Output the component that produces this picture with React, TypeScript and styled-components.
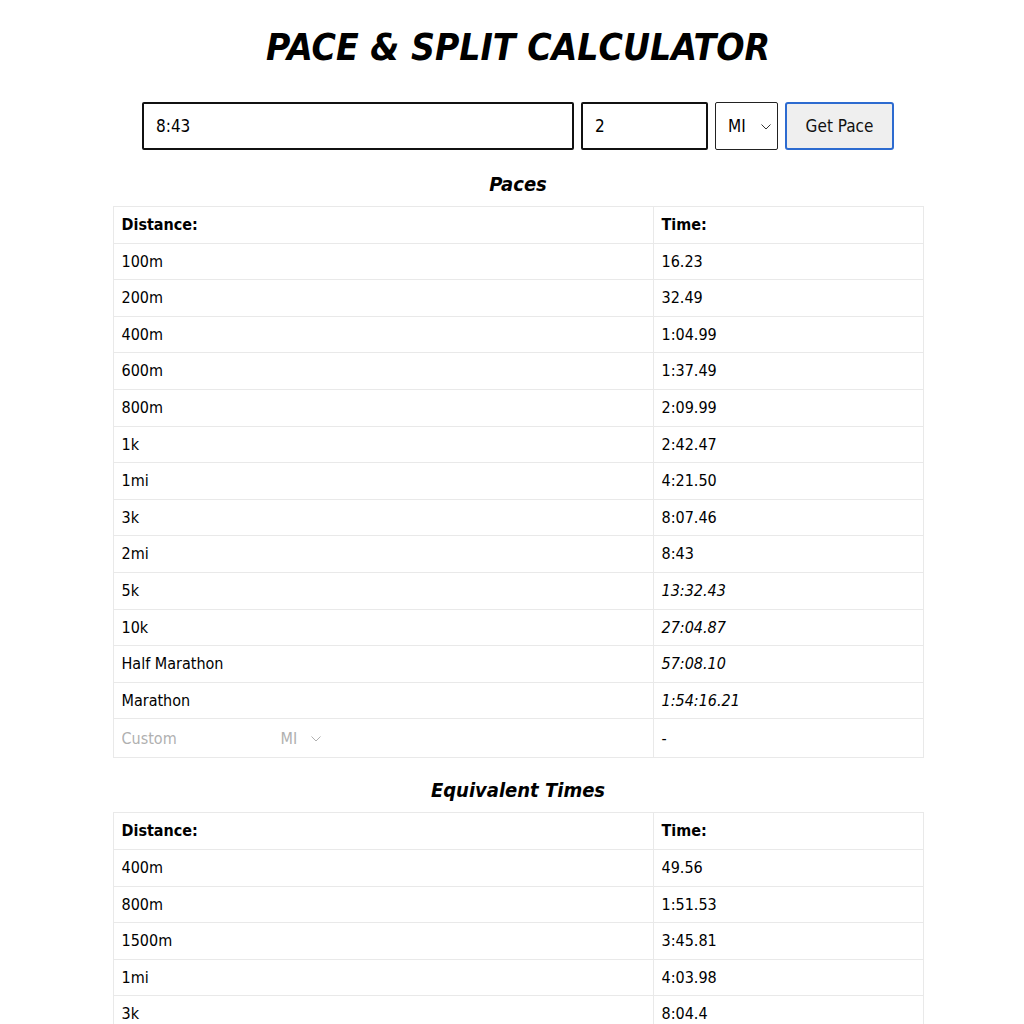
import React from "react";
import styled, { createGlobalStyle } from "styled-components";

const GlobalStyle = createGlobalStyle`
  html, body {
    margin: 0;
    padding: 0;
    background: #ffffff;
  }
  body {
    font-family: "DejaVu Sans Condensed", "DejaVu Sans", sans-serif;
    color: #000;
    font-size: 16px;
  }
`;

const Page = styled.main`
  display: flex;
  flex-direction: column;
  align-items: center;
  padding-left: 12px;
  padding-bottom: 40px;
`;

const Title = styled.h1`
  margin: 24px 0 0;
  font-size: 37px;
  line-height: 48px;
  font-weight: bold;
  font-style: italic;
`;

const Form = styled.form`
  margin-top: 30px;
  display: flex;
  gap: 7px;
  height: 48px;
`;

const TextInput = styled.input<{ $w: number }>`
  box-sizing: border-box;
  width: ${(p) => p.$w}px;
  height: 48px;
  border: 2px solid #111;
  border-radius: 2px;
  padding: 0 12px;
  font-family: inherit;
  font-size: 17px;
  color: #000;
  background: #fff;
  outline: none;
`;

const SelectWrap = styled.div<{ $w?: number }>`
  position: relative;
  display: inline-flex;
  align-items: center;
  ${(p) => (p.$w ? `width: ${p.$w}px;` : "")}
`;

const Chevron = styled.svg<{ $right: number; $color: string }>`
  position: absolute;
  right: ${(p) => p.$right}px;
  top: 50%;
  width: 10px;
  height: 6px;
  margin-top: -2px;
  pointer-events: none;
  stroke: ${(p) => p.$color};
  fill: none;
  stroke-width: 1;
`;

const UnitSelect = styled.select`
  appearance: none;
  -webkit-appearance: none;
  box-sizing: border-box;
  width: 63px;
  height: 48px;
  border: 1.5px solid #222;
  border-radius: 2px;
  padding: 0 0 0 12px;
  font-family: inherit;
  font-size: 17px;
  color: #000;
  background: #fff;
  outline: none;
`;

const Button = styled.button`
  box-sizing: border-box;
  width: 109px;
  height: 48px;
  border: 2px solid #2d6bd0;
  border-radius: 3px;
  background: #efefef;
  font-family: inherit;
  font-size: 17px;
  color: #111;
  padding: 0;
`;

const SectionTitle = styled.h2<{ $top: number }>`
  margin: ${(p) => p.$top}px 0 10px;
  font-size: 20px;
  line-height: 24px;
  font-weight: bold;
  font-style: italic;
`;

const Table = styled.table`
  width: 810px;
  border-collapse: collapse;
  table-layout: fixed;
`;

const Th = styled.th`
  text-align: left;
  font-weight: bold;
  padding: 8px;
  line-height: 19.6px;
  border: 1px solid #e9e9e9;
`;

const Td = styled.td<{ $italic?: boolean }>`
  padding: 8px;
  line-height: 19.6px;
  border: 1px solid #e9e9e9;
  font-style: ${(p) => (p.$italic ? "italic" : "normal")};
`;

const CustomCell = styled.div`
  display: flex;
  align-items: center;
  height: 22px;
`;

const CustomInput = styled.input`
  box-sizing: border-box;
  width: 159px;
  border: none;
  padding: 0;
  font-family: inherit;
  font-size: 16px;
  color: #000;
  background: transparent;
  outline: none;
  &::placeholder {
    color: #b0b0b0;
  }
`;

const CustomSelect = styled.select`
  appearance: none;
  -webkit-appearance: none;
  width: 42px;
  border: none;
  padding: 0;
  font-family: inherit;
  font-size: 16px;
  color: #b0b0b0;
  background: transparent;
  outline: none;
`;

type Row = { d: string; t: string; i?: boolean };

const paces: Row[] = [
  { d: "100m", t: "16.23" },
  { d: "200m", t: "32.49" },
  { d: "400m", t: "1:04.99" },
  { d: "600m", t: "1:37.49" },
  { d: "800m", t: "2:09.99" },
  { d: "1k", t: "2:42.47" },
  { d: "1mi", t: "4:21.50" },
  { d: "3k", t: "8:07.46" },
  { d: "2mi", t: "8:43" },
  { d: "5k", t: "13:32.43", i: true },
  { d: "10k", t: "27:04.87", i: true },
  { d: "Half Marathon", t: "57:08.10", i: true },
  { d: "Marathon", t: "1:54:16.21", i: true },
];

const equivalents: Row[] = [
  { d: "400m", t: "49.56" },
  { d: "800m", t: "1:51.53" },
  { d: "1500m", t: "3:45.81" },
  { d: "1mi", t: "4:03.98" },
  { d: "3k", t: "8:04.4" },
  { d: "5k", t: "14:03.2" },
  { d: "10k", t: "29:16.7" },
];

const ChevronIcon = ({ right, color }: { right: number; color: string }) => (
  <Chevron $right={right} $color={color} viewBox="0 0 10 6">
    <polyline points="0.5,0.5 5,5 9.5,0.5" />
  </Chevron>
);

const Header = () => (
  <>
    <colgroup>
      <col style={{ width: "540px" }} />
      <col style={{ width: "270px" }} />
    </colgroup>
    <thead>
      <tr>
        <Th>Distance:</Th>
        <Th>Time:</Th>
      </tr>
    </thead>
  </>
);

export default function App() {
  return (
    <>
      <GlobalStyle />
      <Page>
        <Title>PACE &amp; SPLIT CALCULATOR</Title>
        <Form onSubmit={(e) => e.preventDefault()}>
          <TextInput $w={432} defaultValue="8:43" />
          <TextInput $w={127} defaultValue="2" />
          <SelectWrap>
            <UnitSelect defaultValue="MI">
              <option value="MI">MI</option>
              <option value="KM">KM</option>
            </UnitSelect>
            <ChevronIcon right={7} color="#333" />
          </SelectWrap>
          <Button type="submit">Get Pace</Button>
        </Form>

        <SectionTitle $top={22}>Paces</SectionTitle>
        <Table>
          <Header />
          <tbody>
            {paces.map((r) => (
              <tr key={r.d}>
                <Td>{r.d}</Td>
                <Td $italic={r.i}>{r.t}</Td>
              </tr>
            ))}
            <tr>
              <Td>
                <CustomCell>
                  <CustomInput placeholder="Custom" />
                  <SelectWrap $w={42}>
                    <CustomSelect defaultValue="MI">
                      <option value="MI">MI</option>
                      <option value="KM">KM</option>
                    </CustomSelect>
                    <ChevronIcon right={2} color="#b0b0b0" />
                  </SelectWrap>
                </CustomCell>
              </Td>
              <Td>-</Td>
            </tr>
          </tbody>
        </Table>

        <SectionTitle $top={20}>Equivalent Times</SectionTitle>
        <Table>
          <Header />
          <tbody>
            {equivalents.map((r) => (
              <tr key={r.d}>
                <Td>{r.d}</Td>
                <Td>{r.t}</Td>
              </tr>
            ))}
          </tbody>
        </Table>
      </Page>
    </>
  );
}
